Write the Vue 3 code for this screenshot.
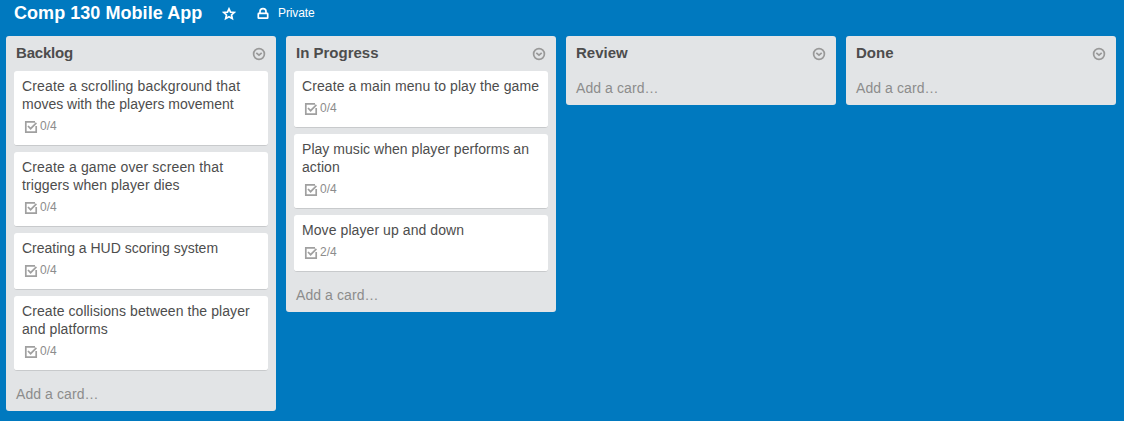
<script setup>
const lists = [
  {
    name: 'Backlog',
    cards: [
      { lines: ['Create a scrolling background that', 'moves with the players movement'], fit: ['loose', 'snug'], done: '0/4' },
      { lines: ['Create a game over screen that', 'triggers when player dies'], fit: ['loose', ''], done: '0/4' },
      { lines: ['Creating a HUD scoring system'], fit: ['snug'], done: '0/4' },
      { lines: ['Create collisions between the player', 'and platforms'], fit: ['', ''], done: '0/4' },
    ],
  },
  {
    name: 'In Progress',
    cards: [
      { lines: ['Create a main menu to play the game'], fit: [''], done: '0/4' },
      { lines: ['Play music when player performs an', 'action'], fit: ['medium', ''], done: '0/4' },
      { lines: ['Move player up and down'], fit: [''], done: '2/4' },
    ],
  },
  { name: 'Review', cards: [] },
  { name: 'Done', cards: [] },
]
</script>

<template>
  <div class="board">
    <header class="bar">
      <h1 class="title">Comp 130 Mobile App</h1>
      <svg class="star" width="14" height="14" viewBox="0 0 14 14">
        <path d="M7 1.9 8.5 5.2 12.2 5.5 9.5 8 10.3 11.6 7 9.8 3.7 11.6 4.5 8 1.8 5.5 5.5 5.2Z" />
      </svg>
      <svg class="lock" width="14" height="14" viewBox="0 0 14 14">
        <path d="M4 6.5V4.6a3 2.9 0 0 1 6 0V6.5" />
        <rect x="2.3" y="6.4" width="9.4" height="4.8" rx="0.5" />
      </svg>
      <span class="privacy">Private</span>
    </header>
    <main class="lists">
      <section v-for="list in lists" :key="list.name" class="list">
        <div class="head">
          <h2 class="name" :class="{ tight: list.name === 'Backlog' }">{{ list.name }}</h2>
          <svg class="menu" width="14" height="14" viewBox="0 0 14 14">
            <circle cx="7" cy="7" r="5.4" />
            <path d="M4.3 5.8 7 8.2 9.7 5.8" />
          </svg>
        </div>
        <article v-for="card in list.cards" :key="card.lines[0]" class="card">
          <p v-for="(line, i) in card.lines" :key="line" class="line" :class="card.fit[i]">{{ line }}</p>
          <div class="badge">
            <svg class="check" width="14" height="14" viewBox="0 0 14 14">
              <path d="M12.2 6V12.2H1.8V1.8H11" />
              <path d="M4 6 6.6 8.7 12.4 2.9" />
            </svg>
            <span class="count">{{ card.done }}</span>
          </div>
        </article>
        <div class="add">Add a card…</div>
      </section>
    </main>
  </div>
</template>

<style>
body {
  background: #0079bf;
}
</style>

<style scoped>
.board {
  height: 421px;
  overflow: hidden;
  background: #0079bf;
  font-family: "Liberation Sans", Arial, sans-serif;
  color: #4d4d4d;
}
.bar {
  display: flex;
  height: 36px;
  padding-left: 14px;
  color: #fff;
}
.title {
  width: 208px;
  margin: 0;
  font-size: 18px;
  line-height: 27px;
  font-weight: bold;
  letter-spacing: 0.05px;
  white-space: nowrap;
}
svg {
  display: block;
  flex: none;
  fill: none;
  stroke-width: 1.7;
}
.star,
.lock {
  margin-top: 7px;
  stroke: #fff;
}
.lock {
  margin-left: 20px;
}
.privacy {
  margin-left: 8px;
  font-size: 12px;
  line-height: 26px;
  letter-spacing: -0.1px;
}
.lists {
  display: flex;
  align-items: flex-start;
  gap: 10px;
  padding-left: 6px;
}
.list {
  box-sizing: border-box;
  flex: none;
  width: 270px;
  padding: 0 8px;
  border-radius: 3px;
  background: #e2e4e6;
}
.head {
  display: flex;
  justify-content: space-between;
  height: 35px;
  padding: 0 2px;
}
.name {
  margin: 0;
  font-size: 15px;
  line-height: 34px;
  font-weight: bold;
}
.name.tight {
  letter-spacing: -0.2px;
}
.menu {
  margin-top: 11px;
  stroke: #999;
}
.card {
  box-sizing: border-box;
  margin-bottom: 6px;
  padding: 6px 8px 10px;
  border-bottom: 1px solid #c8cacc;
  border-radius: 3px;
  background: #fff;
}
.line {
  margin: 0;
  font-size: 14px;
  line-height: 18px;
  letter-spacing: 0.08px;
  white-space: nowrap;
}
.line.loose {
  letter-spacing: 0.145px;
}
.line.medium {
  letter-spacing: 0.04px;
}
.line.snug {
  letter-spacing: 0;
}
.badge {
  display: flex;
  height: 22px;
  padding: 0 0 0 2px;
  color: #8c8c8c;
}
.check {
  margin-top: 7px;
  stroke: #a0a0a0;
}
.count {
  margin-left: 2px;
  font-size: 12px;
  line-height: 26px;
}
.add {
  height: 34px;
  padding-left: 2px;
  font-size: 14px;
  line-height: 34px;
  letter-spacing: 0.08px;
  color: #8c8c8c;
}
</style>
